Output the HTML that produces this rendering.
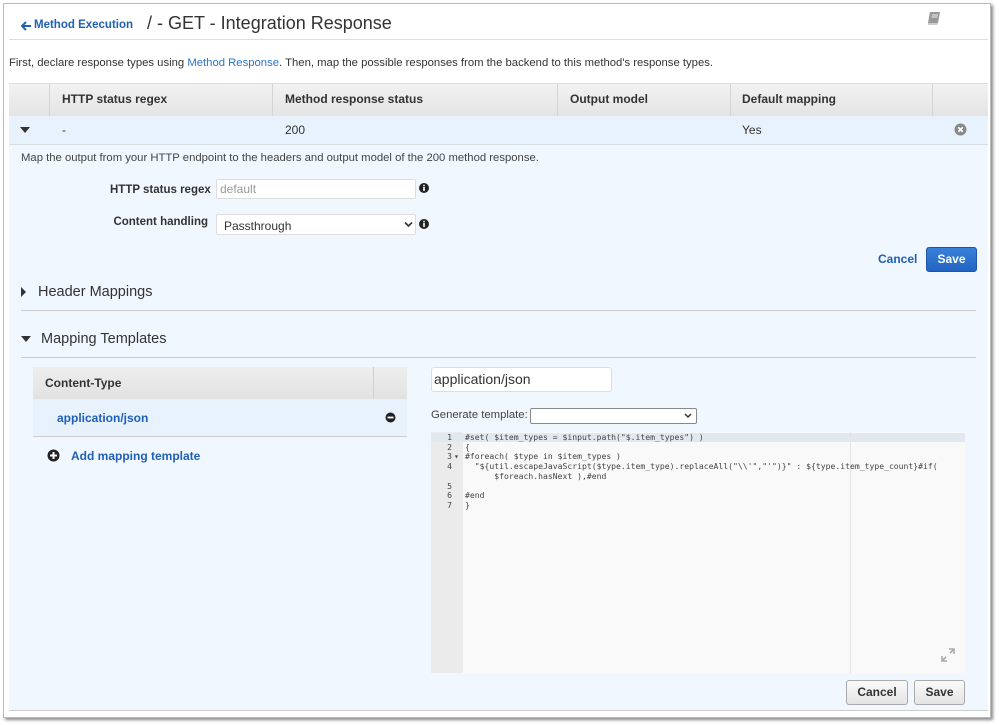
<!DOCTYPE html>
<html><head><meta charset="utf-8"><style>
*{box-sizing:border-box;margin:0;padding:0}
body{width:999px;height:725px;background:#fff;font-family:"Liberation Sans",Arial,sans-serif;position:relative;overflow:hidden;color:#333}
.a{position:absolute}
.frame{left:3px;top:3px;width:988px;height:715px;border:1px solid #bbb;box-shadow:2px 2px 3px #888;background:#fff}
.b{font-weight:bold}
.link{color:#1f5fb5}
.mono{font-family:"DejaVu Sans Mono","Liberation Mono",monospace;font-size:8.1px;color:#444;white-space:pre;line-height:9.7px}
.btn{border:1px solid #aaa;border-radius:3px;background:linear-gradient(#fafafa,#e4e4e4);font-size:12px;font-weight:bold;text-align:center;color:#333}
</style></head><body>
<div class="a frame"></div>
<svg class="a" style="left:21px;top:21px" width="11" height="10"><path d="M5 1L1 5l4 4M1 5h9" stroke="#1f5fb5" stroke-width="2" fill="none"/></svg>
<div class="a link b" style="left:34px;top:19px;font-size:11.5px">Method Execution</div>
<div class="a" style="left:147px;top:13px;font-size:18px;color:#333">/ - GET - Integration Response</div>
<svg class="a" style="left:926px;top:10px" width="16" height="16" viewBox="0 0 16 16"><path d="M4 2h10l-2 11H2z" fill="#999"/><path d="M2 13h10l-1 2H2z" fill="#ccc"/><path d="M6 5h6M5.5 7h6" stroke="#eee" stroke-width="1"/></svg>
<div class="a" style="left:9px;top:39px;width:979px;height:1px;background:#ddd"></div>
<div class="a" style="left:9px;top:57px;font-size:11.3px;color:#333">First, declare response types using <span style="color:#2e73c7">Method Response</span>. Then, map the possible responses from the backend to this method's response types.</div>
<!-- table header -->
<div class="a" style="left:9px;top:83px;width:979px;height:33px;background:linear-gradient(#f2f2f2,#e4e4e4);border-top:1px solid #ddd"></div>
<div class="a" style="left:49px;top:84px;width:1px;height:32px;background:#d4d4d4"></div>
<div class="a" style="left:272px;top:84px;width:1px;height:32px;background:#d4d4d4"></div>
<div class="a" style="left:557px;top:84px;width:1px;height:32px;background:#d4d4d4"></div>
<div class="a" style="left:730px;top:84px;width:1px;height:32px;background:#d4d4d4"></div>
<div class="a" style="left:932px;top:84px;width:1px;height:32px;background:#d4d4d4"></div>
<div class="a b" style="left:62px;top:92px;font-size:12px">HTTP status regex</div>
<div class="a b" style="left:285px;top:92px;font-size:12px">Method response status</div>
<div class="a b" style="left:570px;top:92px;font-size:12px">Output model</div>
<div class="a b" style="left:742px;top:92px;font-size:12px">Default mapping</div>
<div class="a" style="left:9px;top:116px;width:979px;height:29px;background:#e7f2fd;border-bottom:1px solid #d8dde2"></div>
<div class="a" style="left:20px;top:127px;width:0;height:0;border-left:5px solid transparent;border-right:5px solid transparent;border-top:6px solid #333"></div>
<div class="a" style="left:62px;top:123px;font-size:12px">-</div>
<div class="a" style="left:285px;top:123px;font-size:12px">200</div>
<div class="a" style="left:742px;top:123px;font-size:12px">Yes</div>
<svg class="a" style="left:954px;top:123px" width="13" height="13"><circle cx="6.5" cy="6.5" r="6" fill="#888"/><path d="M4.3 4.3l4.4 4.4M8.7 4.3l-4.4 4.4" stroke="#fff" stroke-width="1.8"/></svg>
<!-- blue region -->
<div class="a" style="left:9px;top:145px;width:979px;height:566px;background:#f1f7fe;border-bottom:1px solid #ccc"></div>
<div class="a" style="left:21px;top:152px;font-size:11.3px;color:#444">Map the output from your HTTP endpoint to the headers and output model of the 200 method response.</div>
<div class="a b" style="left:110px;top:184px;font-size:11.5px;width:98px;text-align:right;white-space:nowrap">HTTP status regex</div>
<div class="a" style="left:216px;top:179px;width:200px;height:20px;background:#fff;border:1px solid #ddd;border-radius:2px;font-size:12px;color:#999;padding:2px 3px">default</div>
<svg class="a" style="left:419px;top:183px" width="10" height="10"><circle cx="5" cy="5" r="5" fill="#222"/><rect x="4.2" y="4" width="1.6" height="4" fill="#fff"/><rect x="4.2" y="1.8" width="1.6" height="1.5" fill="#fff"/></svg>
<div class="a b" style="left:100px;top:216px;font-size:11.5px;width:108px;text-align:right;white-space:nowrap">Content handling</div>
<div class="a" style="left:216px;top:214px;width:200px;height:21px;background:#fff;border:1px solid #ddd;border-radius:2px;font-size:12px;color:#333;padding:4px 7px">Passthrough</div>
<svg class="a" style="left:404px;top:221px" width="9" height="7"><path d="M1 1.5l3.5 3.5 3.5-3.5" stroke="#333" stroke-width="1.6" fill="none"/></svg>
<svg class="a" style="left:419px;top:219px" width="10" height="10"><circle cx="5" cy="5" r="5" fill="#222"/><rect x="4.2" y="4" width="1.6" height="4" fill="#fff"/><rect x="4.2" y="1.8" width="1.6" height="1.5" fill="#fff"/></svg>
<div class="a link b" style="left:878px;top:252px;font-size:12px">Cancel</div>
<div class="a b" style="left:926px;top:247px;width:51px;height:25px;background:linear-gradient(#3a80d8,#2264c2);border:1px solid #1d55a8;border-radius:3px;color:#fff;font-size:12px;text-align:center;line-height:23px">Save</div>
<div class="a" style="left:21px;top:287px;width:0;height:0;border-top:5px solid transparent;border-bottom:5px solid transparent;border-left:5px solid #333"></div>
<div class="a" style="left:38px;top:284px;font-size:14.5px;color:#333">Header Mappings</div>
<div class="a" style="left:21px;top:310px;width:955px;height:1px;background:#ccc"></div>
<div class="a" style="left:21px;top:336px;width:0;height:0;border-left:5px solid transparent;border-right:5px solid transparent;border-top:6px solid #333"></div>
<div class="a" style="left:41px;top:331px;font-size:14.5px;color:#333">Mapping Templates</div>
<div class="a" style="left:21px;top:357px;width:955px;height:1px;background:#ccc"></div>
<!-- content type table -->
<div class="a" style="left:33px;top:367px;width:374px;height:32px;background:linear-gradient(#eee,#e2e2e2)"></div>
<div class="a" style="left:373px;top:367px;width:1px;height:32px;background:#d0d0d0"></div>
<div class="a b" style="left:45px;top:376px;font-size:12px">Content-Type</div>
<div class="a" style="left:33px;top:399px;width:374px;height:38px;background:#e7f2fd;border-bottom:1px solid #ccc"></div>
<div class="a link b" style="left:57px;top:411px;font-size:12px">application/json</div>
<svg class="a" style="left:385px;top:412px" width="11" height="11"><circle cx="5.5" cy="5.5" r="5" fill="#222"/><rect x="2.5" y="4.6" width="6" height="1.8" fill="#fff"/></svg>
<svg class="a" style="left:47px;top:449px" width="13" height="13"><circle cx="6.5" cy="6.5" r="6" fill="#222"/><path d="M6.5 3v7M3 6.5h7" stroke="#fff" stroke-width="2"/></svg>
<div class="a link b" style="left:71px;top:449px;font-size:12px">Add mapping template</div>
<div class="a" style="left:431px;top:367px;width:181px;height:25px;background:#fff;border:1px solid #ddd;border-radius:3px;font-size:14px;color:#333;padding:3px 2px">application/json</div>
<div class="a" style="left:431px;top:409px;font-size:11.3px;color:#444">Generate template:</div>
<div class="a" style="left:530px;top:408px;width:167px;height:16px;background:#fff;border:1px solid #888;border-radius:2px"></div>
<svg class="a" style="left:684px;top:413px" width="8" height="6"><path d="M1 1l3 3 3-3" stroke="#333" stroke-width="1.5" fill="none"/></svg>
<!-- editor -->
<div class="a" style="left:431px;top:432px;width:534px;height:241px;background:#f9f9f9"></div>
<div class="a" style="left:431px;top:432px;width:32px;height:241px;background:#ebebeb"></div>
<div class="a" style="left:431px;top:433px;width:534px;height:9px;background:#e2e8f0"></div>
<div class="a" style="left:850px;top:432px;width:1px;height:241px;background:#e4e4e4"></div>
<div class="a mono" style="left:440px;top:433px;text-align:right;width:12px">1
2
3
4

5
6
7</div>
<div class="a mono" style="left:454px;top:452px">▾</div>
<div class="a mono" style="left:465px;top:433px">#set( $item_types = $input.path("$.item_types") )
{
#foreach( $type in $item_types )
  "${util.escapeJavaScript($type.item_type).replaceAll("\\'","'")}" : ${type.item_type_count}#if(
      $foreach.hasNext ),#end

#end
}</div>
<svg class="a" style="left:940px;top:647px" width="16" height="16"><path d="M9 2h5v5M14 2l-4 4M7 14H2V9M2 14l4-4" stroke="#aaa" stroke-width="1.6" fill="none"/></svg>
<div class="a btn" style="left:846px;top:680px;width:62px;height:25px;line-height:23px">Cancel</div>
<div class="a btn" style="left:914px;top:680px;width:51px;height:25px;line-height:23px">Save</div>
</body></html>
